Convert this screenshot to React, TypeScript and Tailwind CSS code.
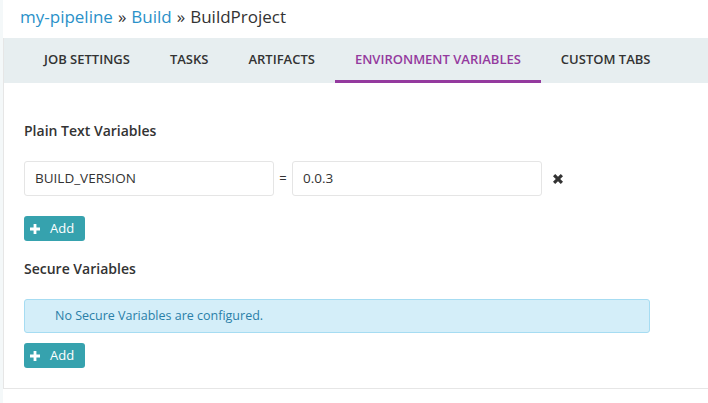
import React from "react";

const tabs = ["Job Settings", "Tasks", "Artifacts", "Environment Variables", "Custom Tabs"];

const PlusIcon = () => (
  <svg width="10" height="10" viewBox="0 0 10 10" className="fill-white">
    <path d="M3.6 0h2.8v3.6H10v2.8H6.4V10H3.6V6.4H0V3.6h3.6z" />
  </svg>
);

const AddButton = () => (
  <button className="flex h-[25px] w-[61px] items-center gap-[10px] rounded-[3px] bg-[#36a2ae] pl-[6px] text-[13px] text-white">
    <PlusIcon />
    <span>Add</span>
  </button>
);

const App = () => {
  return (
    <div className="flex h-[403px] w-[708px] bg-[#f4f8f9] font-['Open_Sans',sans-serif] text-[#333]">
      <div className="ml-[3px] flex flex-1 flex-col">
        <div className="h-[38px] bg-white pl-[17px] pt-[5px] text-[17px] leading-[24px]">
          <span className="text-[#2a91c9]">my-pipeline</span>
          <span className="mx-[5px]">»</span>
          <span className="text-[#2a91c9]">Build</span>
          <span className="mx-[5px]">»</span>
          <span>BuildProject</span>
        </div>

        <div className="h-[351px] border-b border-l border-[#e6e6e6] bg-white">
          <div className="flex h-[45px] bg-[#e7eef0] pl-[20px]">
            {tabs.map((t, i) => (
              <div
                key={t}
                className={
                  i === 3
                    ? "flex items-center border-b-[3px] border-[#943a9e] px-[20px] pt-[2px] text-[13px] font-semibold uppercase text-[#943a9e]"
                    : "flex items-center border-b-[3px] border-transparent px-[20px] pt-[2px] text-[13px] font-semibold uppercase text-[#333]"
                }
              >
                {t}
              </div>
            ))}
          </div>

          <div className="px-[20px] pt-[38px]">
            <h3 className="text-[14px] font-semibold leading-[20px]">Plain Text Variables</h3>

            <div className="mt-[20px] flex items-center">
              <div className="flex h-[35px] w-[250px] items-center rounded-[3px] border border-[#e5e5e5] px-[10px] text-[13.5px]">
                BUILD_VERSION
              </div>
              <span className="w-[18px] text-center text-[13px]">=</span>
              <div className="flex h-[35px] w-[250px] items-center rounded-[3px] border border-[#e5e5e5] px-[10px] text-[13.5px]">
                0.0.3
              </div>
              <svg width="10" height="10" viewBox="0 0 10 10" className="ml-[11px] fill-[#333]">
                <path d="M0 2.2L2.2 0 5 2.8 7.8 0 10 2.2 7.2 5 10 7.8 7.8 10 5 7.2 2.2 10 0 7.8 2.8 5z" />
              </svg>
            </div>

            <div className="mt-[20px]">
              <AddButton />
            </div>

            <h3 className="mt-[18px] text-[14px] font-semibold leading-[20px]">Secure Variables</h3>

            <div className="mt-[20px] flex h-[34px] w-[626px] items-center rounded-[3px] border border-[#a6dcf2] bg-[#d4eef9] pl-[30px] text-[12.5px] text-[#2a7fa8]">
              No Secure Variables are configured.
            </div>

            <div className="mt-[10px]">
              <AddButton />
            </div>
          </div>
        </div>
        <div className="flex-1 bg-white" />
      </div>
    </div>
  );
};

export default App;
